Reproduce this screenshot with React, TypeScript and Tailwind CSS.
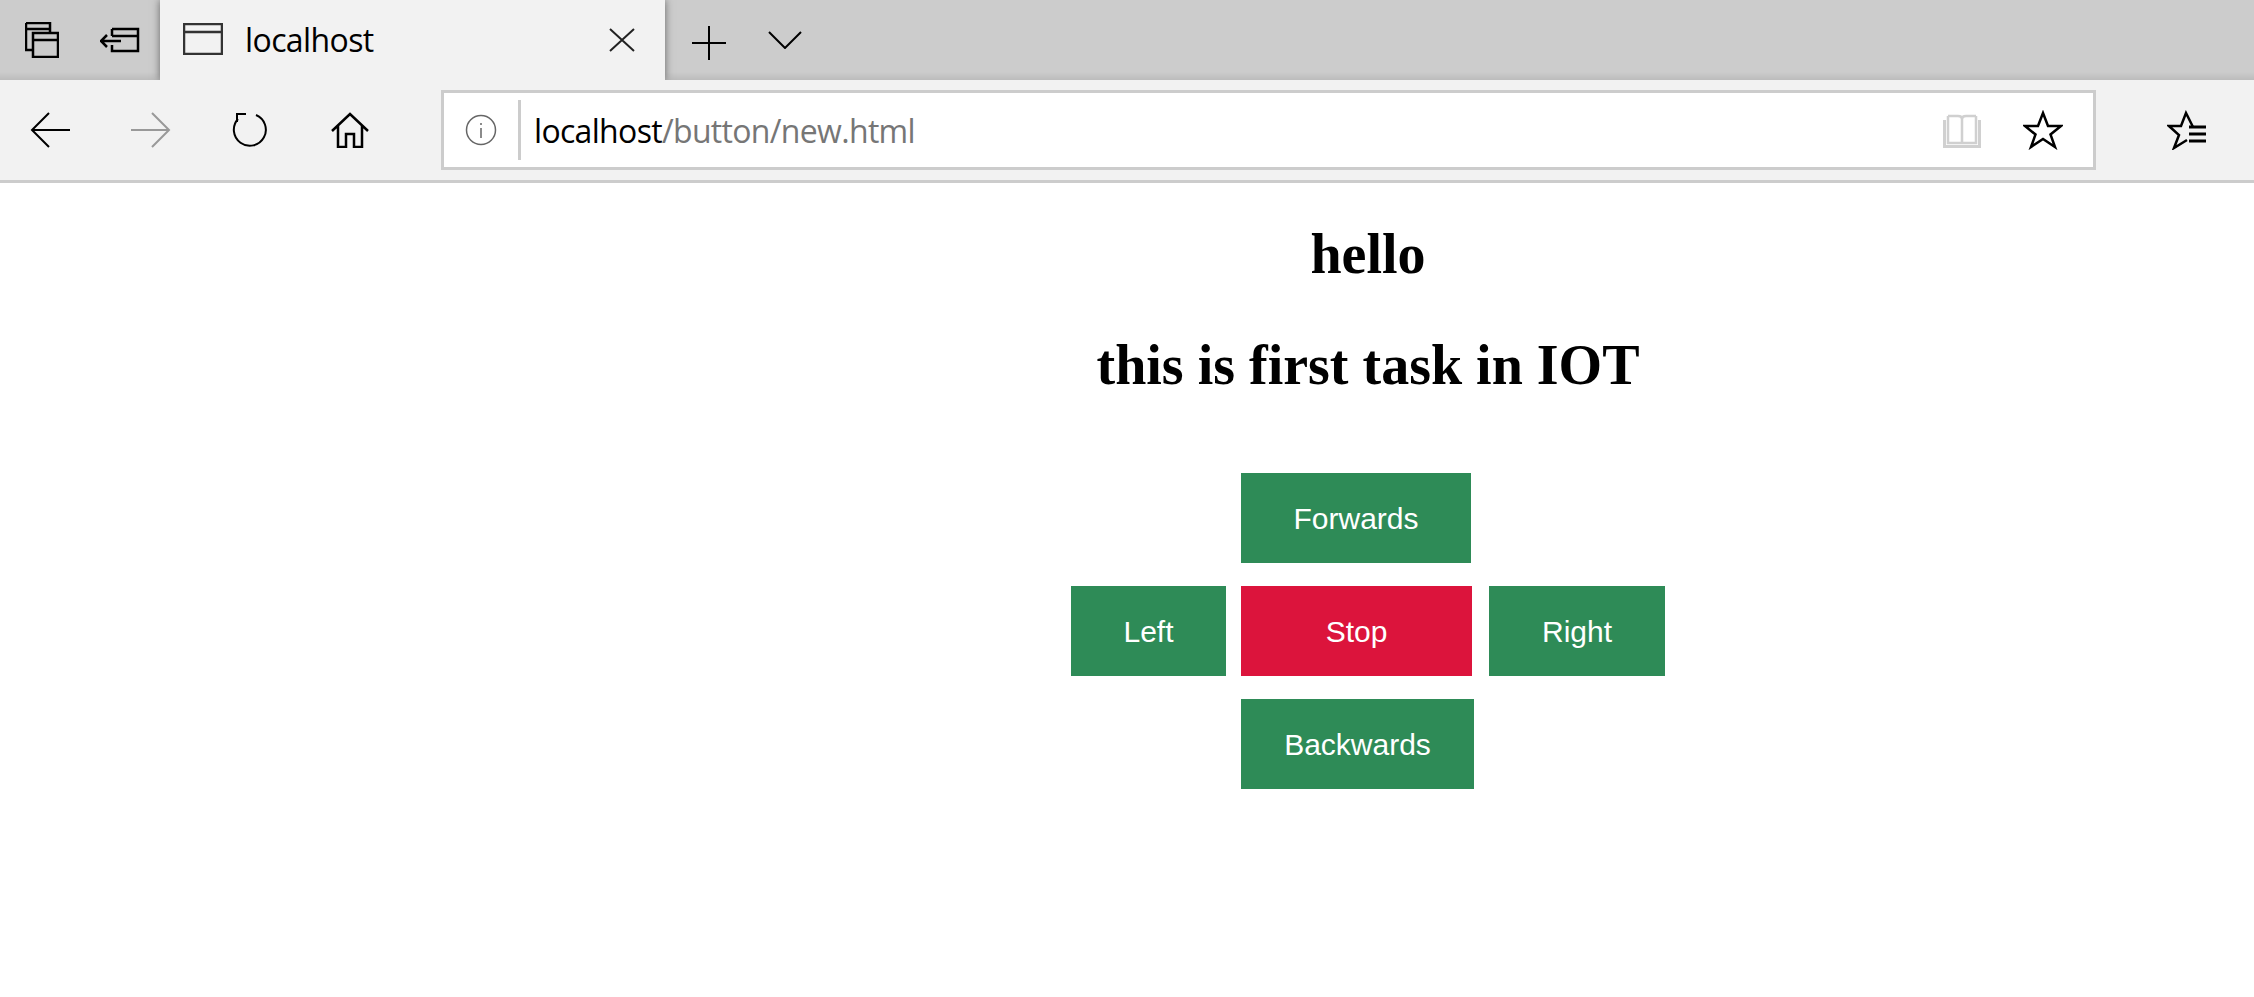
import React from "react";

const ui = { fontFamily: '"Open Sans", "Noto Sans", sans-serif' };

function Svg({ w, h, children, className = "" }: { w: number; h: number; children: React.ReactNode; className?: string }) {
  return (
    <svg width={w} height={h} viewBox={`0 0 ${w} ${h}`} fill="none" stroke="currentColor" strokeWidth={2} strokeMiterlimit={10} className={className}>
      {children}
    </svg>
  );
}

function Btn({ label, bg, w }: { label: string; bg: string; w: string }) {
  return (
    <button className={`${bg} ${w} h-[90px] text-white text-[30px] shrink-0`} style={{ fontFamily: '"Liberation Sans", Arial, sans-serif' }}>
      {label}
    </button>
  );
}

export default function App() {
  return (
    <div className="w-[2254px] h-[997px] bg-white overflow-hidden">
      {/* tab strip */}
      <div className="h-[80px] bg-linear-to-b from-[#cccccc] via-[#cccccc] via-90% to-[#bcbcbc] flex items-stretch overflow-hidden" style={ui}>
        <div className="w-[80px] flex items-center pl-[25px] text-black">
          <Svg w={34} h={36}>
            <path d="M1 1h24v9M1 1v27h6M1 7h24M8 11h25v24H8zM8 18h25" strokeWidth={2.5} />
          </Svg>
        </div>
        <div className="w-[80px] flex items-center justify-center text-black">
          <Svg w={40} h={26}>
            <path d="M12 2h26v22H12v-6M12 9V2M12 9h26M1 14h20M7 8l-6 6 6 6" strokeWidth={2.5} />
          </Svg>
        </div>
        <div className="w-[505px] bg-[#f2f2f2] flex items-center pl-[23px] shadow-[0_0_8px_rgba(0,0,0,0.5)] relative">
          <Svg w={40} h={32} className="text-[#333333] -mt-[2px]">
            <path d="M1 1h38v30H1zM1 9h38" strokeWidth={2.5} />
          </Svg>
          <span className="ml-[22px] text-[32px] text-black tracking-[-0.6px]">localhost</span>
          <Svg w={26} h={24} className="absolute left-[449px] top-[28px] text-[#222222]">
            <path d="M1 1l24 22M25 1L1 23" />
          </Svg>
        </div>
        <div className="w-[84px] flex items-center justify-center text-black pl-[4px] pt-[5px]">
          <Svg w={34} h={34}>
            <path d="M17 0v34M0 17h34" />
          </Svg>
        </div>
        <div className="flex items-center text-black ml-[19px]">
          <Svg w={34} h={18}>
            <path d="M1 1l16 16L33 1" />
          </Svg>
        </div>
      </div>

      {/* toolbar */}
      <div className="h-[103px] bg-[#f2f2f2] border-b-[3px] border-[#cccccc] flex items-center" style={ui}>
        <div className="w-[100px] flex justify-center text-black">
          <Svg w={40} h={36}>
            <path d="M40 18H2M19 1L2 18l17 17" />
          </Svg>
        </div>
        <div className="w-[100px] flex justify-center text-[#999999] pl-[2px]">
          <Svg w={40} h={36}>
            <path d="M0 18h38M21 1l17 17-17 17" />
          </Svg>
        </div>
        <div className="w-[100px] flex justify-center text-black">
          <Svg w={36} h={36}>
            <path d="M24 3A16 16 0 1 1 6 7M5 10V2h9" />
          </Svg>
        </div>
        <div className="w-[100px] flex justify-center text-black">
          <Svg w={38} h={36}>
            <path d="M1 19L19 2l18 17M7 14v21h8V22h8v13h8V14" strokeWidth={2.5} />
          </Svg>
        </div>
        <div className="ml-[41px] w-[1655px] h-[80px] bg-white border-[3px] border-[#cccccc] flex items-center">
          <div className="w-[74px] flex justify-center text-[#666666]">
            <Svg w={32} h={32}>
              <circle cx={16} cy={16} r={14.5} strokeWidth={1.5} />
              <path d="M16 14v10M16 9v2" strokeWidth={1.5} />
            </Svg>
          </div>
          <div className="w-[3px] h-[60px] bg-[#cccccc]" />
          <div className="ml-[13px] mt-[2px] text-[32px] tracking-[-0.68px] text-black flex-1">
            localhost<span className="text-[#767676]">/button/new.html</span>
          </div>
          <div className="text-[#d0d0d0] mr-[42px]">
            <Svg w={38} h={35}>
              <path d="M5 3v27h28V3M5 3h10c2 0 4 1 4 3v25M33 3H23c-2 0-4 1-4 3" strokeWidth={2.5} />
              <path d="M1.500 7v26.500h35V7" strokeWidth={3} />
            </Svg>
          </div>
          <div className="text-black mr-[30px]">
            <Svg w={40} h={40}>
              <path d="M20 3l5 13h13l-10.500 8.500L32 37l-12-8-12 8 4.500-12.500L2 16h13z" strokeWidth={2.5} />
            </Svg>
          </div>
        </div>
        <div className="ml-[71px] text-black">
          <Svg w={40} h={40}>
            <path d="M26 17L19 3l-5 13H2l10 9-5 13 13-8" strokeWidth={2.5} />
            <path d="M22 17h17M22 24h17M22 31h17" strokeWidth={3} />
          </Svg>
        </div>
      </div>

      {/* page */}
      <main className="ml-[482px] flex flex-col items-center" style={{ fontFamily: '"Liberation Serif", "Times New Roman", serif' }}>
        <h1 className="mt-[39px] text-[56px] leading-[64px] font-bold text-black">hello</h1>
        <h1 className="mt-[47px] text-[56px] leading-[64px] font-bold text-black">this is first task in IOT</h1>
        <div className="mt-[76px] w-[594px] flex flex-col gap-[23px]">
          <div className="pl-[170px] flex">
            <Btn label="Forwards" bg="bg-[#2e8b57]" w="w-[230px]" />
          </div>
          <div className="flex">
            <Btn label="Left" bg="bg-[#2e8b57]" w="w-[155px]" />
            <div className="w-[15px]" />
            <Btn label="Stop" bg="bg-[#dc143c]" w="w-[231px]" />
            <div className="w-[17px]" />
            <Btn label="Right" bg="bg-[#2e8b57]" w="w-[176px]" />
          </div>
          <div className="pl-[170px] flex">
            <Btn label="Backwards" bg="bg-[#2e8b57]" w="w-[233px]" />
          </div>
        </div>
      </main>
    </div>
  );
}
